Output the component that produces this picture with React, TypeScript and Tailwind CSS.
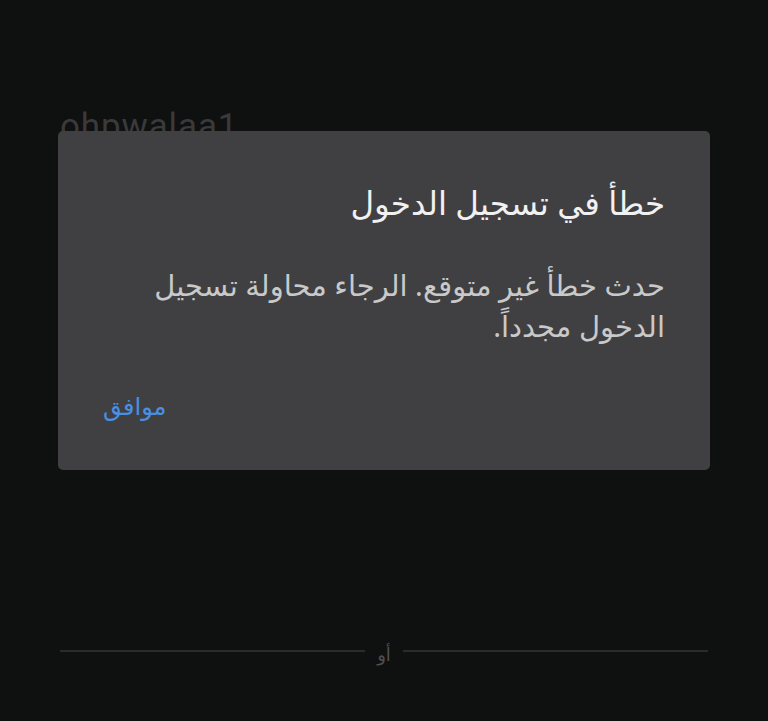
export default function App() {
  return (
    <div
      className="relative w-[768px] h-[721px] overflow-hidden bg-[#0f1010]"
      style={{ fontFamily: '"Noto Sans", "DejaVu Sans", sans-serif' }}
    >
      {/* background login screen */}
      <div className="flex flex-col h-full px-[60px]">
        <div className="pt-[105px] text-[35px] leading-[44px] text-[#3a3a3b] tracking-wide" style={{ fontFamily: '"Roboto", sans-serif' }}>
          ohpwalaa1
        </div>
        <div className="flex-1" />
        <div className="flex items-center gap-3 mb-[58px]">
          <div className="flex-1 h-[2px] bg-[#2a2b2b]" />
          <span className="text-[18px] leading-[18px] text-[#4f4f50] pt-[6px]">أو</span>
          <div className="flex-1 h-[2px] bg-[#2a2b2b]" />
        </div>
      </div>

      {/* dialog */}
      <div
        dir="rtl"
        className="absolute left-[58px] top-[131px] w-[652px] h-[339px] rounded-[5px] bg-[#404042] px-[45px] pt-[50px]"
      >
        <h2 className="text-[32.5px] leading-[44px] text-[#f1f1f1]">خطأ في تسجيل الدخول</h2>
        <p className="mt-[39px] max-w-[522px] text-[29px] leading-[41px] text-[#c9c9ca]">
          حدث خطأ غير متوقع. الرجاء محاولة تسجيل الدخول مجدداً.
        </p>
        <div className="mt-[42px] flex justify-end">
          <button className="text-[24px] leading-[36px] text-[#4a8fe2]">موافق</button>
        </div>
      </div>
    </div>
  );
}
